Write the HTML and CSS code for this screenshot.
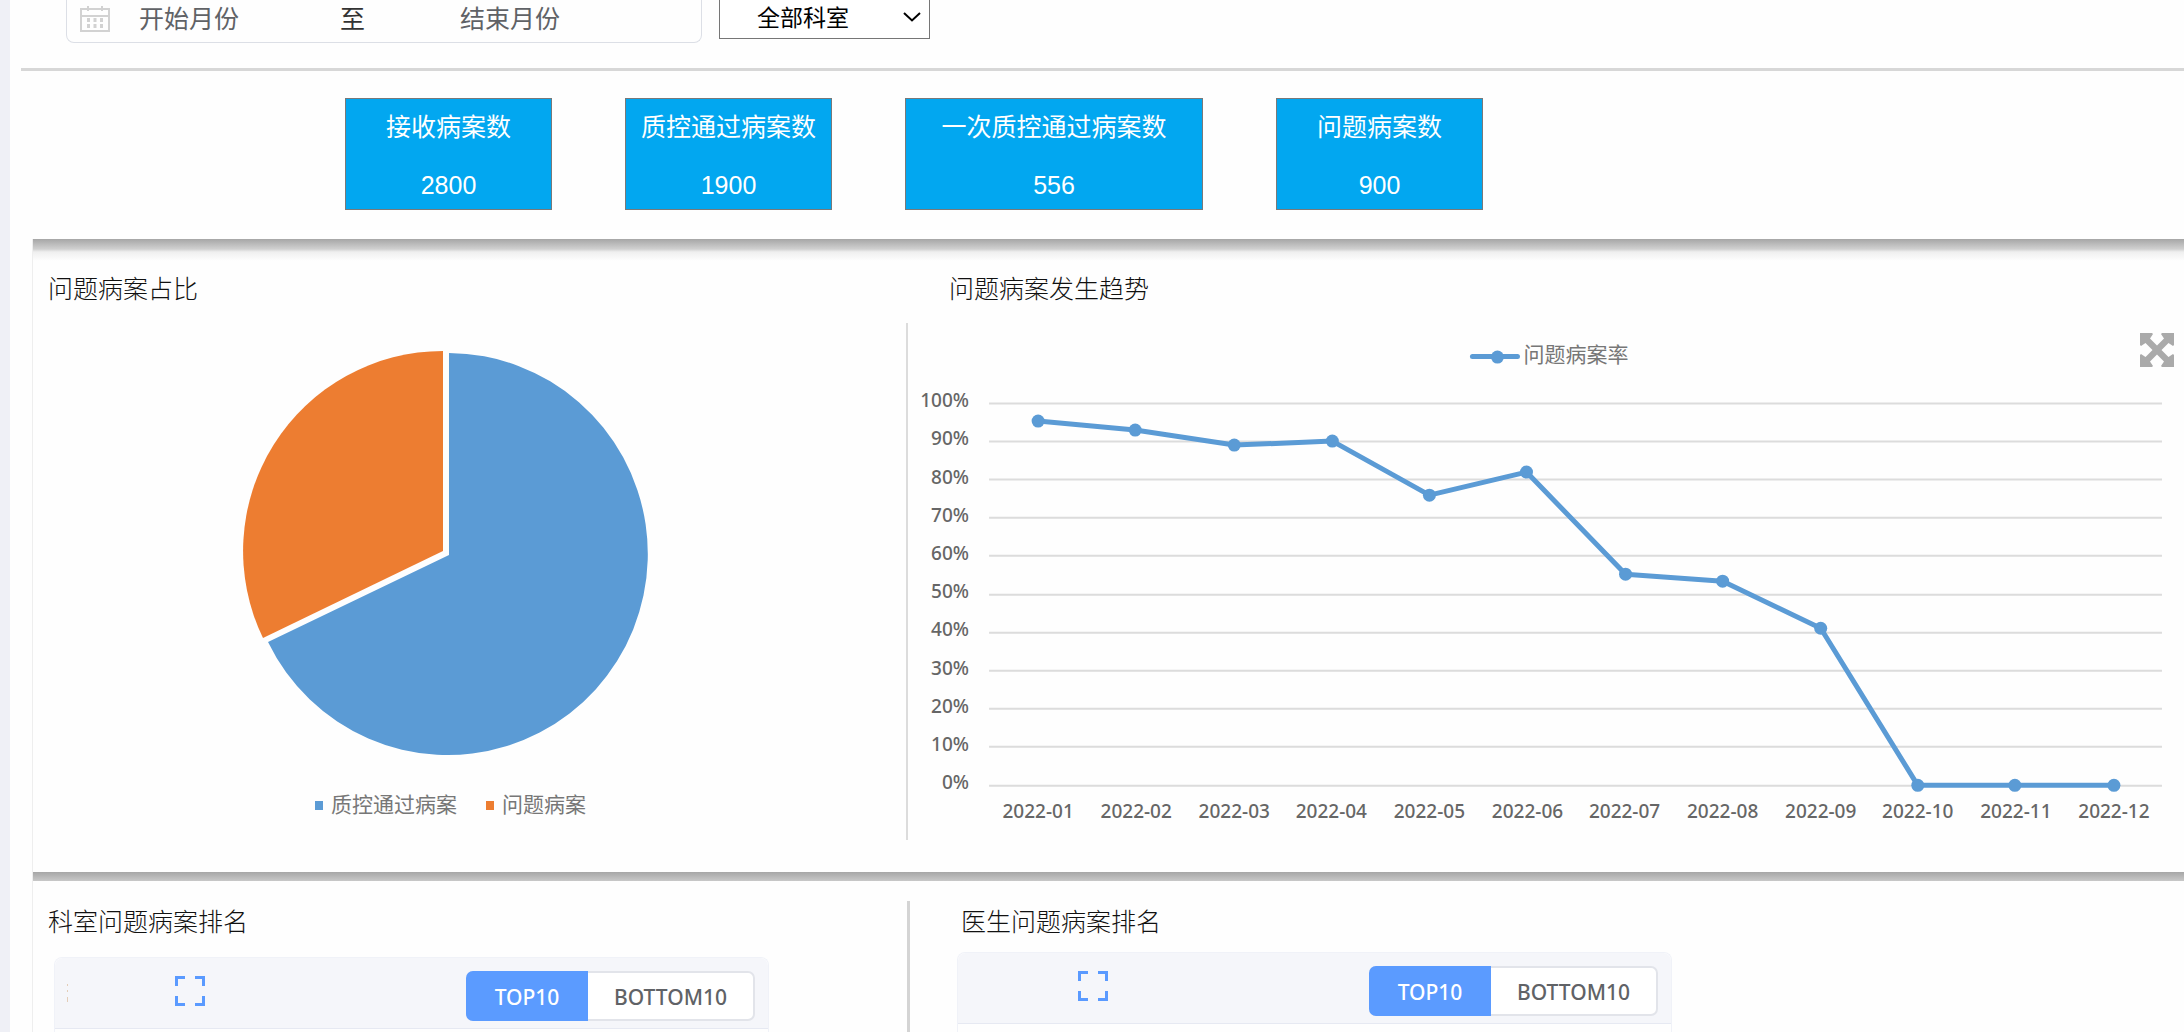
FILE: index.html
```html
<!DOCTYPE html>
<html lang="zh-CN">
<head>
<meta charset="utf-8">
<title>病案质控统计</title>
<link rel="stylesheet" href="styles.css">
</head>
<body>
<main class="page">
  <form class="filters">
    <div class="date-range">
      <svg class="calendar" viewBox="0 0 30 26" aria-hidden="true">
        <path d="M1 3h28v22H1zM1 10h28M8 0v5M22 0v5" fill="none" stroke="#d2d2d2" stroke-width="2"/>
        <path d="M7 12h3v4H7zM13.500 12h3v4h-3zM20 12h3v4h-3zM7 18h3v4H7zM13.500 18h3v4h-3zM20 18h3v4h-3z" fill="#d2d2d2"/>
      </svg>
      <input class="month" type="text" placeholder="开始月份" aria-label="开始月份">
      <span class="to">至</span>
      <input class="month month-end" type="text" placeholder="结束月份" aria-label="结束月份">
    </div>
    <div class="dept">
      <select class="dept-select" aria-label="科室"><option>全部科室</option></select>
      <svg class="chevron" viewBox="0 0 18 10" aria-hidden="true"><path d="M1 1l8 7.500L17 1" fill="none" stroke="#000" stroke-width="2"/></svg>
    </div>
  </form>

  <section class="cards">
    <div class="card"><span>接收病案数</span><span class="num">2800</span></div>
    <div class="card"><span>质控通过病案数</span><span class="num">1900</span></div>
    <div class="card card-wide"><span>一次质控通过病案数</span><span class="num">556</span></div>
    <div class="card"><span>问题病案数</span><span class="num">900</span></div>
  </section>

  <section class="row charts">
    <div class="cell">
      <h2 class="title">问题病案占比</h2>
      <svg class="pie" viewBox="0 0 410 410" role="img" aria-label="问题病案占比">
        <path d="M207 206V4A200 201 0 1 1 26 293z" fill="#5b9bd5"/>
        <path d="M201 202V2A200 200 0 0 0 21 289z" fill="#ed7d31"/>
      </svg>
      <ul class="legend">
        <li><i class="key key-pass"></i>质控通过病案</li>
        <li><i class="key key-issue"></i>问题病案</li>
      </ul>
    </div>
    <div class="cell">
      <h2 class="title title-trend">问题病案发生趋势</h2>
      <div class="trend">
        <svg class="trend-plot" viewBox="0 0 1275 517" role="img" aria-label="问题病案率">
          <path d="M81 80.500h1172M81 118.500h1172M81 156.500h1172M81 194.500h1172M81 232.500h1172M81 271.500h1172M81 309.500h1172M81 347.500h1172M81 385.500h1172M81 423.500h1172M81 462.500h1172" stroke="#dcdcdc" stroke-width="2"/>
          <g class="axis-y">
            <text x="61" y="84">100%</text><text x="61" y="122">90%</text><text x="61" y="161">80%</text><text x="61" y="199">70%</text><text x="61" y="237">60%</text><text x="61" y="275">50%</text><text x="61" y="313">40%</text><text x="61" y="352">30%</text><text x="61" y="390">20%</text><text x="61" y="428">10%</text><text x="61" y="466">0%</text>
          </g>
          <g class="axis-x">
            <text x="130" y="495">2022-01</text><text x="228" y="495">2022-02</text><text x="326" y="495">2022-03</text><text x="423" y="495">2022-04</text><text x="521" y="495">2022-05</text><text x="619" y="495">2022-06</text><text x="716" y="495">2022-07</text><text x="814" y="495">2022-08</text><text x="912" y="495">2022-09</text><text x="1009" y="495">2022-10</text><text x="1107" y="495">2022-11</text><text x="1205" y="495">2022-12</text>
          </g>
          <polyline points="130,98 227,107 326,122 424,118 521,172 618,149 717,251 814,258 912,305 1009,462 1106,462 1205,462" fill="none" stroke="#5b9bd5" stroke-width="5" stroke-linejoin="round"/>
          <g fill="#5b9bd5">
            <circle cx="130" cy="98" r="6.500"/><circle cx="227" cy="107" r="6.500"/><circle cx="326" cy="122" r="6.500"/><circle cx="424" cy="118" r="6.500"/><circle cx="521" cy="172" r="6.500"/><circle cx="618" cy="149" r="6.500"/><circle cx="717" cy="251" r="6.500"/><circle cx="814" cy="258" r="6.500"/><circle cx="912" cy="305" r="6.500"/><circle cx="1009" cy="462" r="6.500"/><circle cx="1106" cy="462" r="6.500"/><circle cx="1205" cy="462" r="6.500"/>
            <circle cx="589" cy="34" r="6.500"/>
          </g>
          <path d="M564 33.500h45" stroke="#5b9bd5" stroke-width="5" stroke-linecap="round"/>
          <text class="series" x="615" y="39">问题病案率</text>
        </svg>
        <button class="expand" type="button" aria-label="放大">
          <svg viewBox="0 0 34 34" aria-hidden="true"><path d="M0 0h12l1 1-3 4.500 7 7 7-7L21 1l1-1h12v12l-1 1-4.500-3-7 7 7 7 4.500-3 1 1v12H22l-1-1 3-4.500-7-7-7 7 3 4.500-1 1H0V22l1-1 4.500 3 7-7-7-7L1 13l-1-1z" fill="#aaa"/></svg>
        </button>
      </div>
    </div>
  </section>

  <section class="row ranks">
    <div class="cell">
      <h2 class="title">科室问题病案排名</h2>
      <div class="panel">
        <div class="panel-head">
          <svg class="mark" viewBox="0 0 2 24" aria-hidden="true"><path d="M0 3h1v2H0zM0 9h1v2H0zM0 16h1v5H0z" fill="#e3cdb8"/></svg>
          <button class="full" type="button" aria-label="全屏"><svg viewBox="0 0 30 30" aria-hidden="true"><path d="M1.500 10V1.500H10M20 1.500h8.500V10M28.500 20v8.500H20M10 28.500H1.500V20" fill="none" stroke="#5a9aff" stroke-width="3"/></svg></button>
          <div class="switch"><button class="opt opt-on" type="button">TOP10</button><button class="opt" type="button">BOTTOM10</button></div>
        </div>
      </div>
    </div>
    <div class="cell cell-doctor">
      <h2 class="title">医生问题病案排名</h2>
      <div class="panel">
        <div class="panel-head">
          <svg class="mark" viewBox="0 0 2 24" aria-hidden="true"></svg>
          <button class="full" type="button" aria-label="全屏"><svg viewBox="0 0 30 30" aria-hidden="true"><path d="M1.500 10V1.500H10M20 1.500h8.500V10M28.500 20v8.500H20M10 28.500H1.500V20" fill="none" stroke="#5a9aff" stroke-width="3"/></svg></button>
          <div class="switch"><button class="opt opt-on" type="button">TOP10</button><button class="opt" type="button">BOTTOM10</button></div>
        </div>
      </div>
    </div>
  </section>
</main>
</body>
</html>
```
FILE: styles.css
```css
* { box-sizing: border-box; }
body {
  margin: 0;
  background: #fefefe;
  color: #333;
  font-family: "Liberation Sans", "Noto Sans CJK SC", sans-serif;
  font-size: 25px;
}
button, input, select { font: inherit; color: inherit; }
button { padding: 0; border: 0; background: none; cursor: pointer; }
svg { display: block; }

.page {
  display: flex;
  flex-direction: column;
  min-height: 100vh;
  border-left: 10px solid #eff0f6;
}

/* Filter bar */
.filters {
  display: flex;
  align-items: flex-start;
  gap: 17px;
  height: 71px;
  margin-left: 11px;
  padding-left: 45px;
  border-bottom: 3px solid #d7d7d7;
}
.date-range {
  display: flex;
  align-items: center;
  width: 636px;
  height: 43px;
  padding: 0 12px 4px 13px;
  border: 1px solid #dcdfe6;
  border-top: 0;
  border-radius: 0 0 8px 8px;
}
.calendar { width: 30px; height: 26px; margin-right: 29px; }
.month {
  width: 201px;
  height: 36px;
  padding: 0;
  border: 0;
  outline: 0;
  background: none;
}
.month::placeholder { color: #606266; opacity: 1; }
.to { width: 120px; line-height: 36px; }
.dept { position: relative; }
.dept-select {
  display: block;
  width: 211px;
  height: 39px;
  padding: 0 37px 3px;
  border: 1px solid #767676;
  border-top: 0;
  border-radius: 0;
  appearance: none;
  background: #fff;
  color: #000;
  font-size: 23px;
}
.chevron { position: absolute; right: 9px; top: 12px; width: 18px; height: 10px; pointer-events: none; }

/* Totals */
.cards {
  display: flex;
  gap: 73px;
  height: 168px;
  margin-left: 22px;
  padding: 27px 0 29px 313px;
}
.card {
  display: flex;
  flex-direction: column;
  justify-content: space-between;
  width: 207px;
  padding: 10px 0 6px;
  border: 1px solid #797979;
  background: #02a7f0;
  color: #fff;
  text-align: center;
  line-height: 36px;
}
.card-wide { width: 298px; }

/* Two-column rows */
.row {
  display: grid;
  grid-template-columns: 874fr 1277fr;
  margin-left: 22px;
  border-left: 1px solid #eee;
}
.charts {
  grid-template-columns: 873fr 1278fr;
  padding-top: 29px;
  background: linear-gradient(#a6a6a6, #d0d0d0 10px, #efefef 13px, #fefefe 22px) no-repeat 0 0 / 100% 22px;
}
.ranks {
  flex: 1;
  padding-top: 29px;
  background: linear-gradient(#a6a6a6, #c8c8c8) no-repeat 0 0 / 100% 9px;
}
.title {
  margin: 0;
  padding-left: 15px;
  color: #111;
  font-size: 25px;
  font-weight: 300;
  line-height: 42px;
}
.title-trend { padding-left: 43px; }

.pie { width: 410px; margin: 39px auto 0 209px; }
.legend {
  display: flex;
  gap: 29px;
  margin: 0;
  padding: 30px 0 0 282px;
  list-style: none;
  color: #777;
  font-size: 21px;
  line-height: 32px;
}
.legend li { display: flex; align-items: center; gap: 8px; }
.key { width: 8px; height: 9px; }
.key-pass { background: #5b9bd5; }
.key-issue { background: #ed7d31; }

.trend {
  position: relative;
  margin: 13px 0 32px;
  border-left: 2px solid #dcdcdc;
}
.trend-plot { width: 100%; }
.trend-plot text { fill: #666; font-family: "Noto Sans", sans-serif; font-size: 19px; font-weight: 500; }
.axis-y { text-anchor: end; }
.axis-x { text-anchor: middle; }
.trend-plot .series { fill: #777; font-family: "Noto Sans CJK SC", sans-serif; font-size: 21px; font-weight: 400; }
.expand { position: absolute; top: 10px; right: 10px; width: 34px; height: 34px; }

/* Ranking panels */
.ranks .cell { display: flex; flex-direction: column; }
.ranks .title { margin-bottom: 14px; }
.ranks .panel { margin-left: 21px; }
.cell-doctor { border-left: 3px solid #d4d4d4; }
.ranks .cell-doctor .title { padding-left: 51px; margin-bottom: 9px; }
.ranks .cell-doctor .panel { margin-left: 47px; }
.panel {
  flex: 1;
  width: 715px;
  border: 1px solid #f0f2f8;
  border-bottom: 0;
  border-radius: 8px 8px 0 0;
}
.panel-head {
  display: flex;
  align-items: flex-start;
  height: 71px;
  padding: 13px 13px 0 12px;
  border-bottom: 1px solid #e6e9f2;
  border-radius: 8px 8px 0 0;
  background: #f5f6fa;
}
.mark { width: 2px; height: 24px; margin: 10px 106px 0 0; }
.full { width: 30px; height: 30px; margin-top: 5px; }
.full svg { width: 30px; height: 30px; }
.switch {
  display: flex;
  width: 289px;
  height: 50px;
  margin-left: auto;
  border: 2px solid #e2e4ea;
  border-radius: 7px;
  background: #fff;
}
.opt {
  flex: 1;
  padding-top: 2px;
  color: #606266;
  font-family: "Noto Sans", sans-serif;
  font-size: 21px;
  font-weight: 500;
}
.opt-on {
  flex: 0 0 122px;
  margin: -2px 0 -2px -2px;
  border-radius: 7px 0 0 7px;
  background: #5b9bff;
  color: #fff;
}
```
